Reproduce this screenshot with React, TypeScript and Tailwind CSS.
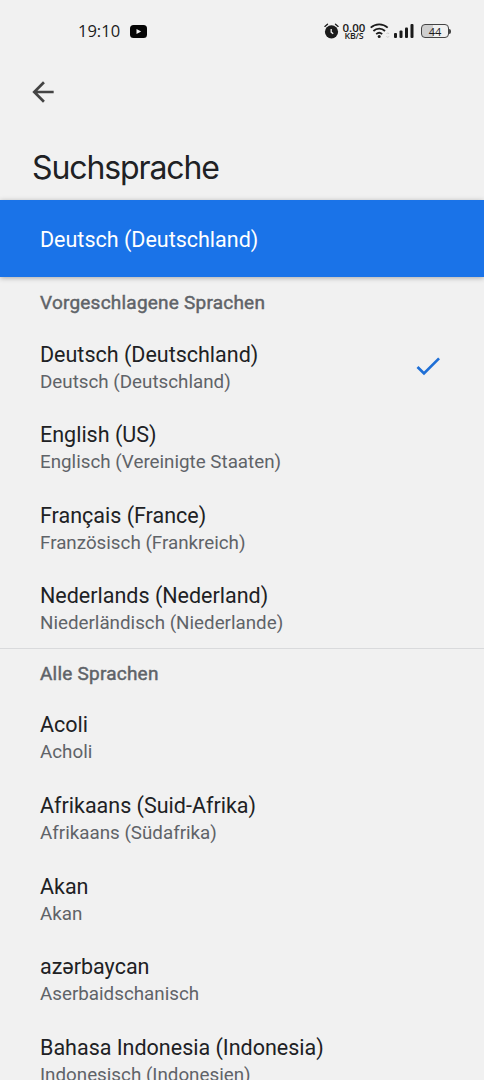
type Language = {
  name: string;
  label: string;
  selected?: boolean;
};

const SUGGESTED: Language[] = [
  { name: 'Deutsch (Deutschland)', label: 'Deutsch (Deutschland)', selected: true },
  { name: 'English (US)', label: 'Englisch (Vereinigte Staaten)' },
  { name: 'Français (France)', label: 'Französisch (Frankreich)' },
  { name: 'Nederlands (Nederland)', label: 'Niederländisch (Niederlande)' },
];

const ALL: Language[] = [
  { name: 'Acoli', label: 'Acholi' },
  { name: 'Afrikaans (Suid-Afrika)', label: 'Afrikaans (Südafrika)' },
  { name: 'Akan', label: 'Akan' },
  { name: 'azərbaycan', label: 'Aserbaidschanisch' },
  { name: 'Bahasa Indonesia (Indonesia)', label: 'Indonesisch (Indonesien)' },
];

function AlarmIcon() {
  return (
    <svg width="15" height="16" viewBox="0 0 15 16" fill="none" stroke="#1b1b1b">
      <circle cx="7.5" cy="8.8" r="6.6" fill="#1b1b1b" stroke="none" />
      <path d="M.9 3.4 3.5 1.2M14.1 3.4 11.5 1.2" strokeWidth="1.3" strokeLinecap="round" />
      <path d="M7.2 6v3.1l2 1.6" stroke="#f1f1f1" strokeWidth="1.3" />
    </svg>
  );
}

function WifiIcon() {
  return (
    <svg width="20" height="16" viewBox="0 0 20 16" fill="none" stroke="#1b1b1b" strokeWidth="1.8">
      <path d="M.7 4.7a12.6 12.6 0 0 1 17 0M3.4 8a8.4 8.4 0 0 1 11.6 0M6.2 11.1a4.5 4.5 0 0 1 6 0" />
      <circle cx="9.2" cy="13.6" r="1.5" fill="#1b1b1b" stroke="none" />
      <path d="m16.5 11 1.3-1.3 1.3 1.3M16.5 13.2l1.3 1.3 1.3-1.3" stroke="#cacaca" strokeWidth="1" />
    </svg>
  );
}

function SignalIcon() {
  return (
    <svg width="20" height="14" viewBox="0 0 20 14" fill="#1b1b1b">
      <rect x="0" y="9" width="3" height="5" rx="1" />
      <rect x="5.5" y="6.5" width="3" height="7.5" rx="1" />
      <rect x="11" y="3.5" width="3" height="10.5" rx="1" />
      <rect x="16.5" y="0" width="3" height="14" rx="1" />
    </svg>
  );
}

function StatusBar() {
  return (
    <header className="flex h-[62px] items-center pr-[33px] pl-[78px] text-[#1b1b1b]">
      <span className="font-['Open_Sans',sans-serif] text-[16.5px] font-medium leading-5">19:10</span>
      <svg className="ml-[10px]" width="17" height="13" viewBox="0 0 17 13">
        <rect width="17" height="13" rx="3.5" fill="#050505" />
        <path d="m6.5 4 4.7 2.5L6.5 9z" fill="#f1f1f1" />
      </svg>
      <div className="ml-auto flex items-center">
        <AlarmIcon />
        <div className="ml-[3px] flex w-[24px] flex-col items-center font-['Open_Sans',sans-serif] font-semibold">
          <span className="text-[11.5px] leading-[9px]">0.00</span>
          <span className="text-[8.8px] leading-[8px] tracking-[-0.2px]">KB/S</span>
        </div>
        <span className="ml-1"><WifiIcon /></span>
        <span className="ml-1"><SignalIcon /></span>
        <div className="ml-[7px] flex items-center">
          <div className="flex h-[14px] w-[28px] items-center justify-center rounded-[4px] border border-[#444] bg-linear-to-r from-[#cfcfcf] from-44% to-[#f1f1f1] to-44% font-['Open_Sans',sans-serif] text-[11px] font-medium leading-none">
            44
          </div>
          <div className="h-[5px] w-[2px] rounded-r bg-[#444]" />
        </div>
      </div>
    </header>
  );
}

function SectionTitle({ children }: { children: string }) {
  return (
    <h2 className="pt-[13px] pl-10 text-[19px] leading-[25px] tracking-[0.22px] text-[#5f6368] [-webkit-text-stroke:0.45px_#5f6368]">
      {children}
    </h2>
  );
}

function LanguageRow({ name, label, selected }: Language) {
  return (
    <li className="flex h-[80.6px] items-center justify-between pr-10 pl-10">
      <div className="pt-[4px]">
        <div className="text-[21.5px] leading-[28px] text-[#202124]">{name}</div>
        <div className="text-[18.8px] leading-[26px] text-[#5f6368]">{label}</div>
      </div>
      {selected && (
        <svg width="32" height="32" viewBox="0 0 24 24" fill="#1f6fd6">
          <path d="M9 16.17 4.83 12l-1.42 1.41L9 19 21 7l-1.41-1.41z" />
        </svg>
      )}
    </li>
  );
}

export default function App() {
  return (
    <div className="h-[1080px] w-full overflow-hidden bg-[#f1f1f1] font-['Roboto',sans-serif] text-[#202124]">
      <StatusBar />
      <div className="flex h-[60px] items-center pl-[27px]">
        <button type="button" aria-label="Zurück">
          <svg width="32" height="32" viewBox="0 0 24 24" fill="#444">
            <path d="M20 11H7.83l5.59-5.59L12 4l-8 8 8 8 1.41-1.41L7.83 13H20v-2z" />
          </svg>
        </button>
      </div>
      <h1 className="flex h-[78px] items-center pt-[13px] pl-8 font-['Inter',sans-serif] text-[32px] tracking-[-1.1px]">
        Suchsprache
      </h1>
      <div className="flex h-[77px] items-center bg-[#1a73e8] pt-[3px] pl-10 text-[21.5px] text-white shadow-[0_1px_5px_rgba(0,0,0,0.3)]">
        Deutsch (Deutschland)
      </div>
      <section className="border-b border-[#d9dadc]">
        <SectionTitle>Vorgeschlagene Sprachen</SectionTitle>
        <ul className="pt-[10.3px]">
          {SUGGESTED.map((lang) => (
            <LanguageRow key={lang.name} {...lang} />
          ))}
        </ul>
      </section>
      <section className="-mt-px">
        <SectionTitle>Alle Sprachen</SectionTitle>
        <ul className="pt-[10.5px]">
          {ALL.map((lang) => (
            <LanguageRow key={lang.name} {...lang} />
          ))}
        </ul>
      </section>
    </div>
  );
}
